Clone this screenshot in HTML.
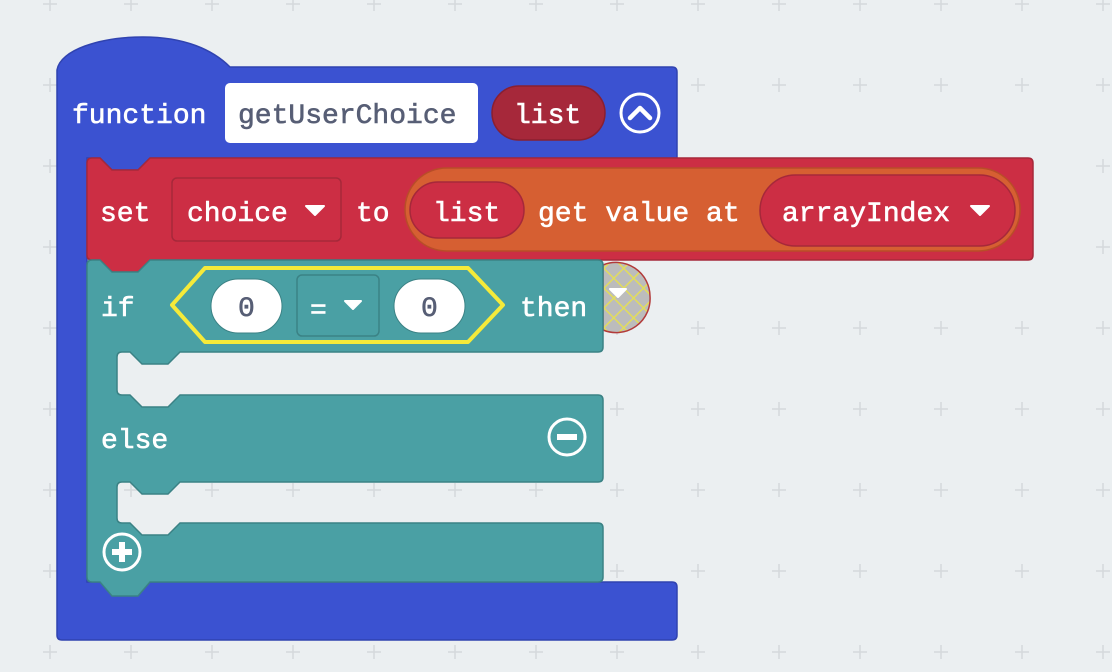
<!DOCTYPE html>
<html><head><meta charset="utf-8"><style>
html,body{margin:0;padding:0;background:#ebeff1;}
svg{display:block}
text{font-family:"Liberation Mono","DejaVu Sans Mono",monospace;font-size:28px;fill:#fff;stroke:#fff;stroke-width:0.6;}
text.d{fill:#575e75;stroke:#575e75;}
</style></head><body>
<svg width="1112" height="672" viewBox="0 0 1112 672" xmlns="http://www.w3.org/2000/svg">
<defs>
<pattern id="grid" x="43" y="-3" width="81" height="81" patternUnits="userSpaceOnUse">
<path d="M7 0v14M0 7h14" stroke="#d5d9dc" stroke-width="1.5"/>
</pattern>
<pattern id="hatch" width="14" height="14" patternUnits="userSpaceOnUse" patternTransform="rotate(45)">
<rect width="14" height="14" fill="#bcbcbc"/>
<path d="M0 0h14M0 0v14" stroke="#e2dc5c" stroke-width="3"/>
</pattern>
</defs>
<rect width="1112" height="672" fill="#ebeff1"/>
<rect width="1112" height="672" fill="url(#grid)"/>

<!-- function block -->
<path d="M57 70 C60 50 100 37 143 37 C185 37 213 50 230 67 L672 67 Q677 67 677 72 L677 158 L150 158 L138 170 L112 170 L100 158 L87 158 L87 582 L672 582 Q677 582 677 587 L677 635 Q677 640 672 640 L62 640 Q57 640 57 635 Z" fill="#3b52d1" stroke="#3043b0" stroke-width="1.5"/>
<text x="72" y="123">function</text>
<rect x="225" y="83" width="253" height="60" rx="5" fill="#fff"/>
<text class="d" x="238" y="123">getUserChoice</text>
<rect x="492" y="86" width="113" height="54" rx="27" fill="#a6283a" stroke="#8a1f30" stroke-width="1.5"/>
<text x="514" y="123">list</text>
<circle cx="640" cy="113" r="19" fill="none" stroke="#fff" stroke-width="3"/>
<path d="M630 118 L640 108 L650 118" fill="none" stroke="#fff" stroke-width="4.5" stroke-linecap="round" stroke-linejoin="round"/>

<!-- set block -->
<path d="M87 163 Q87 158 92 158 L100 158 L112 170 L138 170 L150 158 L1028 158 Q1033 158 1033 163 L1033 255 Q1033 260 1028 260 L150 260 L138 272 L112 272 L100 260 L92 260 Q87 260 87 255 Z" fill="#cc2e44" stroke="#a6283a" stroke-width="1.5"/>
<text x="100" y="221">set</text>
<rect x="172" y="178" width="169" height="63" rx="5" fill="#cc2e44" stroke="#a6283a" stroke-width="1.5"/>
<text x="187" y="221">choice</text>
<path d="M306 206 h18 l-9 9 z" fill="#fff" stroke="#fff" stroke-width="2" stroke-linejoin="round"/>
<text x="356" y="221">to</text>
<rect x="405" y="168" width="615" height="83" rx="41.5" fill="#d65f32" stroke="#b84d28" stroke-width="1.5"/>
<rect x="410" y="182" width="114" height="56" rx="28" fill="#cc2e44" stroke="#a6283a" stroke-width="1.5"/>
<text x="433" y="221">list</text>
<text x="538" y="221">get value at</text>
<rect x="760" y="175" width="255" height="71" rx="35.5" fill="#cc2e44" stroke="#a6283a" stroke-width="1.5"/>
<text x="782" y="221">arrayIndex</text>
<path d="M971 206 h18 l-9 9 z" fill="#fff" stroke="#fff" stroke-width="2" stroke-linejoin="round"/>

<!-- if block -->
<path d="M650 296 A34 34 0 0 0 603 265 L603 330 A34 34 0 0 0 650 296 Z" fill="url(#hatch)" stroke="#b23a3a" stroke-width="1.5"/>
<path d="M87 265 Q87 260 92 260 L100 260 L112 272 L138 272 L150 260 L598 260 Q603 260 603 265 L603 347 Q603 352 598 352 L180 352 L168 364 L142 364 L130 352 L122 352 Q117 352 117 357 L117 390 Q117 395 122 395 L130 395 L142 407 L168 407 L180 395 L598 395 Q603 395 603 400 L603 477 Q603 482 598 482 L180 482 L168 494 L142 494 L130 482 L122 482 Q117 482 117 487 L117 518 Q117 523 122 523 L130 523 L142 535 L168 535 L180 523 L598 523 Q603 523 603 528 L603 577 Q603 582 598 582 L150 582 L138 596 L112 596 L100 582 L92 582 Q87 582 87 577 Z" fill="#4aa0a4" stroke="#3b8285" stroke-width="1.5"/>
<path d="M610 289 h16 l-8 8 z" fill="#fff" stroke="#fff" stroke-width="2" stroke-linejoin="round"/>
<text x="101" y="316">if</text>
<path d="M172 305 L205 268 L468 268 L503 305 L468 342 L205 342 Z" fill="#4aa0a4" stroke="#f5ea3a" stroke-width="4" stroke-linejoin="round"/>
<rect x="211" y="279" width="71" height="54" rx="27" fill="#fff" stroke="#3b8285" stroke-width="1"/>
<text class="d" x="238" y="316">0</text>
<rect x="297" y="275" width="82" height="61" rx="5" fill="#4aa0a4" stroke="#3b8285" stroke-width="1.5"/>
<text x="310" y="318">=</text>
<path d="M345 301 h16 l-8 8 z" fill="#fff" stroke="#fff" stroke-width="2" stroke-linejoin="round"/>
<rect x="394" y="279" width="71" height="54" rx="27" fill="#fff" stroke="#3b8285" stroke-width="1"/>
<text class="d" x="421" y="316">0</text>
<text x="520" y="316">then</text>

<text x="101" y="448">else</text>
<circle cx="567" cy="437" r="18" fill="none" stroke="#fff" stroke-width="3"/>
<rect x="557" y="434" width="20" height="6" fill="#fff"/>
<circle cx="122" cy="552" r="18" fill="none" stroke="#fff" stroke-width="3"/>
<rect x="112" y="549" width="20" height="6" fill="#fff"/>
<rect x="119" y="542" width="6" height="20" fill="#fff"/>
</svg>
</body></html>
